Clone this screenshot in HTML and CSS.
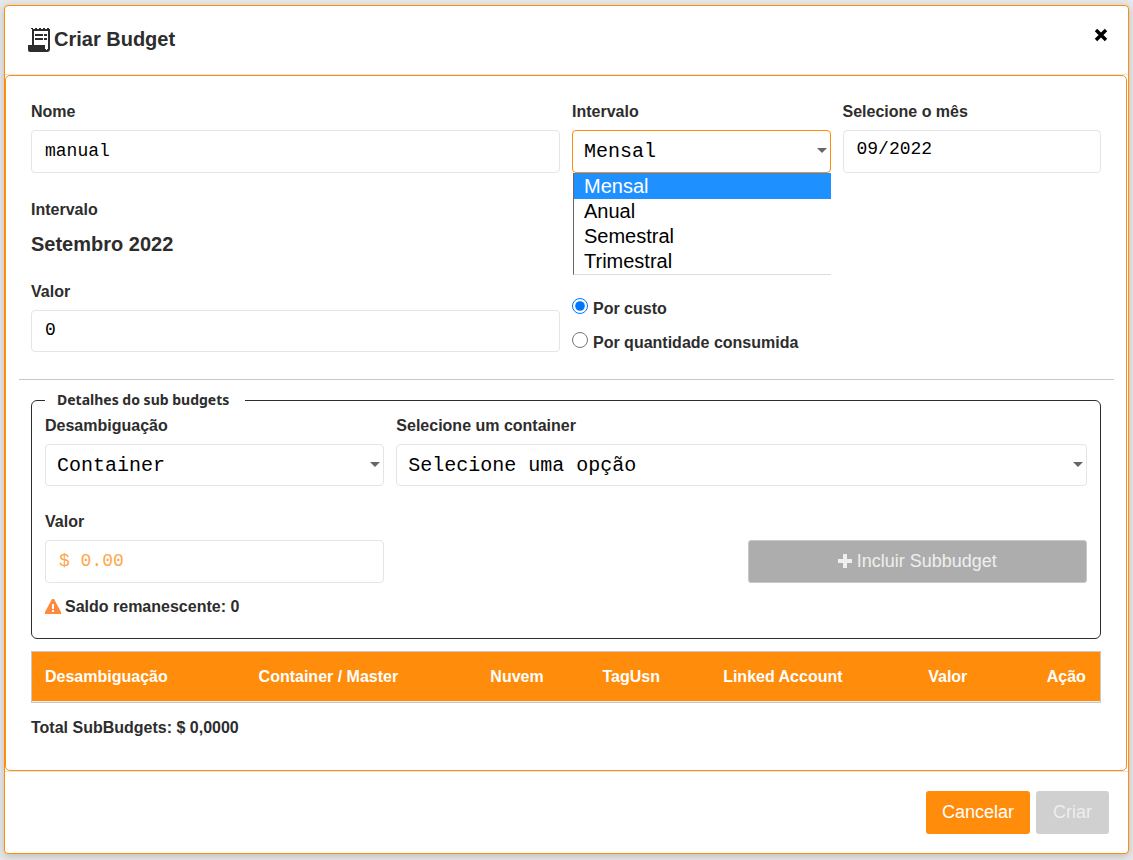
FILE: index.html
```html
<!DOCTYPE html>
<html lang="pt-BR">
<head>
<meta charset="utf-8">
<meta name="viewport" content="width=device-width, initial-scale=1">
<title>Criar Budget</title>
<link rel="stylesheet" href="styles.css">
</head>
<body>
<main class="modal" role="dialog" aria-labelledby="modal-title">
  <header class="modal-header">
    <h1 class="modal-title" id="modal-title">
      <svg class="icon-receipt" viewBox="0 0 22 26" aria-hidden="true">
        <path d="M3 2h2v1h2V2h2v1h2V2h2v1h2V2h2v1h2V2h2v1h1v20c0 2-1 3-3 3H2c-1 0-2-1-2-2v-5h4V3H3z" fill="#2d2d2d"/>
        <path d="M6 5h14v18h-1v1h-1v-1h-1v-4H6z" fill="#fff"/>
        <path d="M7 8h8v2H7zM16 8h3v2h-3zM7 12h8v2H7zM16 12h3v2h-3z" fill="#2d2d2d"/>
      </svg>
      Criar Budget
    </h1>
    <button class="close" type="button" aria-label="Fechar">
      <svg class="icon-close" viewBox="0 0 14 14" aria-hidden="true"><path d="M2 2l10 10M12 2L2 12" fill="none" stroke="#000" stroke-width="3.4"/></svg>
    </button>
  </header>

  <form class="modal-body" id="budget-form">
    <div class="section">
      <div class="grid">
        <div class="field span-6">
          <label for="nome">Nome</label>
          <input class="control" id="nome" type="text" value="manual">
        </div>
        <div class="field span-3">
          <label for="intervalo">Intervalo</label>
          <div class="select-wrap">
            <select class="control select active" id="intervalo">
              <option>Mensal</option><option>Anual</option><option>Semestral</option><option>Trimestral</option>
            </select>
            <ul class="options">
              <li class="option selected">Mensal</li>
              <li class="option">Anual</li>
              <li class="option">Semestral</li>
              <li class="option">Trimestral</li>
            </ul>
          </div>
        </div>
        <div class="field span-3">
          <label for="mes">Selecione o mês</label>
          <input class="control control-month" id="mes" type="text" value="09/2022">
        </div>
      </div>

      <div class="period">
        <span class="label">Intervalo</span>
        <strong class="period-value">Setembro 2022</strong>
      </div>

      <div class="grid">
        <div class="field span-6">
          <label for="valor">Valor</label>
          <input class="control control-value" id="valor" type="text" value="0">
        </div>
        <div class="radios span-6">
          <label class="radio"><input type="radio" name="tipo" checked><span>Por custo</span></label>
          <label class="radio"><input type="radio" name="tipo"><span>Por quantidade consumida</span></label>
        </div>
      </div>
    </div>

    <hr class="divider">

    <div class="section">
      <fieldset class="details">
        <legend>Detalhes do sub budgets</legend>
        <div class="grid">
          <div class="field span-4">
            <label for="desambiguacao">Desambiguação</label>
            <div class="select-wrap">
              <select class="control select" id="desambiguacao"><option>Container</option></select>
            </div>
          </div>
          <div class="field span-8">
            <label for="container">Selecione um container</label>
            <div class="select-wrap">
              <select class="control select" id="container"><option>Selecione uma opção</option></select>
            </div>
          </div>
        </div>
        <div class="grid sub-row">
          <div class="field span-4">
            <label for="subvalor">Valor</label>
            <input class="control control-money" id="subvalor" type="text" placeholder="$ 0.00">
          </div>
          <button class="btn btn-add" type="button" disabled>
            <svg class="icon-plus" viewBox="0 0 14 14" aria-hidden="true"><path d="M5 0h4v5h5v4H9v5H5V9H0V5h5z" fill="currentColor"/></svg>
            Incluir Subbudget
          </button>
        </div>
        <p class="balance">
          <svg class="icon-warning" viewBox="0 0 16 16" aria-hidden="true"><path d="M7 0h2l7 13v2H0v-2z" fill="#ff8a3c"/><path d="M7 5h2v5H7zM7 11h2v2H7z" fill="#fff"/></svg>
          Saldo remanescente: 0
        </p>
      </fieldset>

      <table class="table">
        <thead>
          <tr>
            <th class="c-dis">Desambiguação</th>
            <th class="c-con">Container / Master</th>
            <th class="c-nuv">Nuvem</th>
            <th class="c-tag">TagUsn</th>
            <th class="c-acc">Linked Account</th>
            <th class="c-val">Valor</th>
            <th>Ação</th>
          </tr>
        </thead>
      </table>
      <p class="total">Total SubBudgets: $ 0,0000</p>
    </div>
  </form>

  <footer class="modal-footer">
    <button class="btn btn-primary" type="button">Cancelar</button>
    <button class="btn btn-disabled" type="submit" form="budget-form" disabled>Criar</button>
  </footer>
</main>
</body>
</html>
```
FILE: styles.css
```css
* { box-sizing: border-box; }

body {
  margin: 0;
  padding: 5px 4px 6px;
  background: #e8e8e8;
  color: #2d2d2d;
  font: bold 16px/20px "Liberation Sans", Arial, sans-serif;
}

.modal {
  background: #fff;
  border: 1px solid #ff8c0a;
  border-radius: 4px;
  box-shadow: 0 2px 8px rgba(0, 0, 0, 0.2);
}

.modal-header {
  display: flex;
  justify-content: space-between;
  align-items: flex-start;
  height: 69px;
  padding: 20px 20px 0 23px;
  border-bottom: 1px solid #e5e5e5;
}

.modal-title {
  display: flex;
  align-items: center;
  gap: 4px;
  margin: 0;
  font-size: 20px;
  line-height: 26px;
}

.icon-receipt { width: 22px; height: 26px; }

.close {
  display: flex;
  margin: 0;
  padding: 2px 0;
  border: 0;
  background: none;
}

.icon-close { width: 14px; height: 14px; }

.modal-body {
  margin-right: 1px;
  padding: 26px 12px 32px 13px;
  border: 1px solid #ff8c0a;
  border-radius: 5px;
}

.section { padding: 0 13px 0 12px; }

.grid {
  display: grid;
  grid-template-columns: repeat(12, minmax(0, 1fr));
  column-gap: 12px;
}

.span-3 { grid-column: span 3; }
.span-4 { grid-column: span 4; }
.span-6 { grid-column: span 6; }
.span-8 { grid-column: span 8; }

.field label,
.label {
  display: block;
  margin-bottom: 8px;
}

.control {
  display: block;
  width: 100%;
  height: 43px;
  margin: 0;
  padding: 0 13px 2px;
  border: 1px solid #e5e5e5;
  border-radius: 4px;
  outline: 0;
  background: #fff;
  color: #000;
  font: 18px "Liberation Mono", monospace;
}

.control-month { padding-bottom: 6px; }
.control-value { height: 42px; }
.control-money::placeholder { color: #ffa64d; opacity: 1; }

.select-wrap { position: relative; }

.select-wrap::after {
  content: "";
  position: absolute;
  top: 18px;
  right: 4px;
  border: 5px solid transparent;
  border-top-color: #666;
  border-bottom: 0;
  pointer-events: none;
}

.select {
  padding: 0 11px;
  appearance: none;
  font-size: 20px;
}

.details .select { height: 42px; }
.select.active { border-color: #ff8c0a; }

.options {
  position: absolute;
  z-index: 1;
  top: 100%;
  left: 1px;
  right: 0;
  margin: 0;
  padding: 0;
  border-left: 1px solid #666;
  border-bottom: 1px solid #ddd;
  background: #fff;
  color: #000;
  font-size: 20px;
  font-weight: normal;
  line-height: 25px;
  list-style: none;
}

.option { padding-left: 10px; }

.option.selected {
  padding-top: 1px;
  background: #1e90ff;
  color: #fff;
}

.period { margin: 27px 0 25px; }
.period .label { margin-bottom: 11px; }

.period-value {
  display: block;
  font-size: 20px;
  line-height: 26px;
}

.radios {
  display: flex;
  flex-direction: column;
  gap: 13px;
  padding-top: 16px;
}

.radio {
  display: flex;
  gap: 5px;
}

.radio input {
  width: 16px;
  height: 16px;
  margin: 0;
}

.radio span { padding-top: 1px; }

.divider {
  margin: 26px 0 12px;
  border: 0;
  border-top: 1px solid #c8c8c8;
}

.details {
  min-width: 0;
  margin: 0;
  padding: 8px 13px 21px;
  border: 1px solid #2d2d2d;
  border-radius: 6px;
}

.details legend {
  padding: 0 16px 0 12px;
  font: bold 14px/16px "Noto Sans", sans-serif;
}

.sub-row {
  align-items: end;
  margin-top: 26px;
}

.btn {
  display: flex;
  justify-content: center;
  align-items: center;
  height: 43px;
  border: 0;
  border-radius: 3px;
  color: #fff;
  font: 18px/24px "Liberation Sans", Arial, sans-serif;
}

.btn-add {
  grid-column: 9 / 13;
  gap: 5px;
  padding-bottom: 2px;
  border: 1px solid #c8c8c8;
  background: #adadad;
  color: #efefef;
}

.icon-plus { width: 14px; height: 14px; }

.balance {
  display: flex;
  align-items: center;
  gap: 4px;
  margin: 14px 0 0;
}

.icon-warning { width: 16px; height: 16px; }

.table {
  width: 100%;
  margin: 12px 0 0;
  border: 1px solid #c8c8c8;
  border-spacing: 0;
  table-layout: fixed;
}

.table th {
  height: 50px;
  padding: 0 0 0 13px;
  border-bottom: 1px solid #f5ebe0;
  background: #ff8c0a;
  color: #fff;
  text-align: left;
  white-space: nowrap;
}

.c-dis { width: 20%; }
.c-con { width: 21.7%; }
.c-nuv { width: 10.5%; }
.c-tag { width: 11.3%; }
.c-acc { width: 19.2%; }
.c-val { width: 11.1%; }

.total { margin: 15px 0 0; }

.modal-footer {
  display: flex;
  justify-content: flex-end;
  gap: 6px;
  padding: 19px;
  border-top: 1px solid #e5e5e5;
}

.btn-primary {
  padding: 0 16px 2px;
  background: #ff8c0a;
}

.btn-disabled {
  padding: 0 17px 2px;
  background: #d0d0d0;
  color: #eee;
}
```
